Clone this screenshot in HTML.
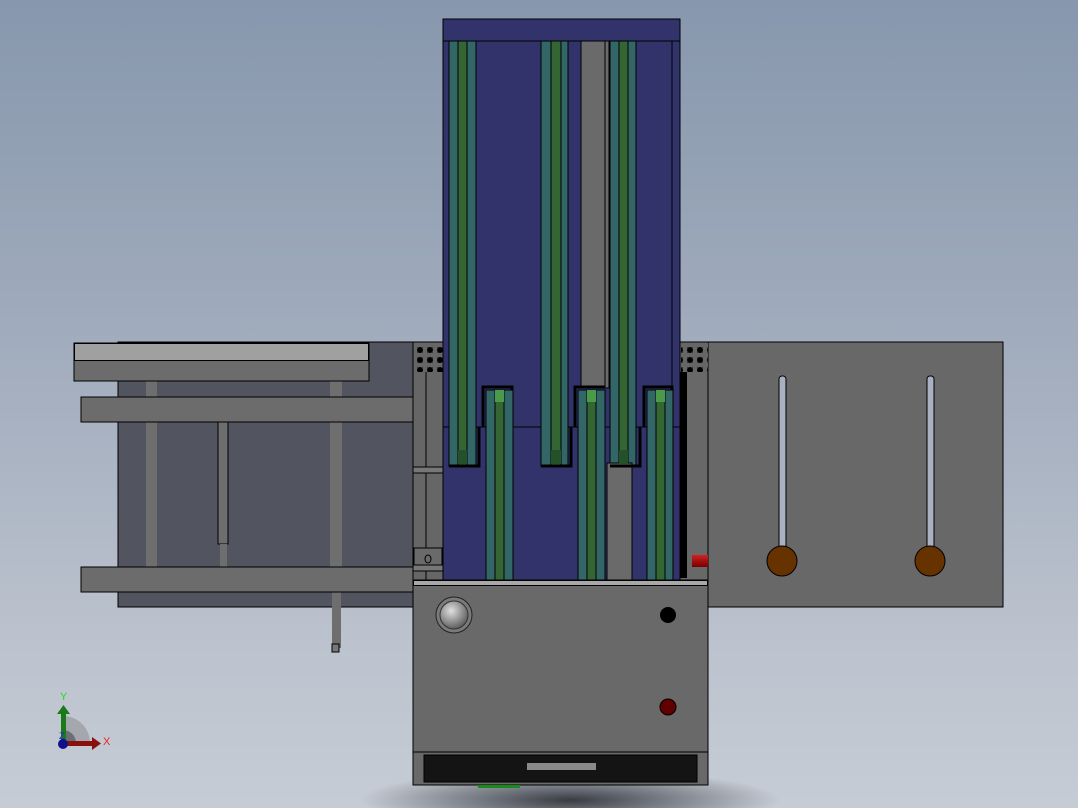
<!DOCTYPE html>
<html><head><meta charset="utf-8"><style>
html,body{margin:0;padding:0;width:1078px;height:808px;overflow:hidden}
body{background:linear-gradient(#8797ad 0%,#a6b0c0 50%,#bcc3ce 80%,#c6ccd5 100%);font-family:"Liberation Sans",sans-serif}
svg{position:absolute;left:0;top:0;overflow:hidden;display:block}
</style></head><body>
<svg width="1078" height="808" viewBox="0 0 1078 808">
<defs>
<radialGradient id="sh" cx="0.5" cy="0.5" r="0.5"><stop offset="0" stop-color="#2a2c33" stop-opacity="0.9"/><stop offset="1" stop-color="#2a2c33" stop-opacity="0"/></radialGradient>
<radialGradient id="kn" cx="0.4" cy="0.35" r="0.7"><stop offset="0" stop-color="#e0e0e0"/><stop offset="1" stop-color="#555"/></radialGradient>
<linearGradient id="rd" x1="0" y1="0" x2="0" y2="1"><stop offset="0" stop-color="#d02020"/><stop offset="1" stop-color="#700"/></linearGradient>
<pattern id="dots" width="10" height="10" patternUnits="userSpaceOnUse"><rect width="10" height="10" fill="#666"/><circle cx="5" cy="5" r="3.5" fill="#000"/><rect x="3" y="0" width="4" height="10" fill="#666"/><rect x="0" y="3" width="10" height="4" fill="#666"/><circle cx="0" cy="0" r="3" fill="#000"/><circle cx="10" cy="0" r="3" fill="#000"/><circle cx="0" cy="10" r="3" fill="#000"/><circle cx="10" cy="10" r="3" fill="#000"/></pattern>
</defs>
<ellipse cx="570" cy="800" rx="210" ry="30" fill="url(#sh)"/>
<rect x="118" y="342" width="295" height="265" fill="#52545f" stroke="#000"/>
<rect x="146" y="381" width="11" height="186" fill="#6e6e6e"/>
<rect x="330" y="381" width="12" height="186" fill="#6e6e6e"/>
<rect x="332" y="592" width="9" height="56" fill="#6e6e6e"/>
<rect x="332" y="644" width="7" height="8" fill="#777" stroke="#000"/>
<rect x="218" y="422" width="10" height="122" fill="#6e6e6e" stroke="#000"/>
<rect x="220" y="544" width="7" height="23" fill="#6e6e6e"/>
<rect x="74" y="343" width="295" height="38" fill="#6c6c6c" stroke="#000"/>
<rect x="74.5" y="343.5" width="294" height="17" fill="#a0a0a0" stroke="#000"/>
<rect x="81" y="397" width="332" height="25" fill="#6c6c6c" stroke="#000"/>
<rect x="81" y="567" width="332" height="25" fill="#6c6c6c" stroke="#000"/>
<rect x="413" y="342" width="30" height="238" fill="#666" stroke="#000"/>
<rect x="414" y="343" width="29" height="29" fill="url(#dots)"/>
<line x1="426" y1="372" x2="426" y2="580" stroke="#000"/>
<rect x="413" y="467" width="37" height="6" fill="#777" stroke="#000"/>
<rect x="413" y="565" width="37" height="6" fill="#777" stroke="#000"/>
<rect x="414" y="548" width="28" height="17" fill="#6a6a6a" stroke="#000"/>
<ellipse cx="428" cy="559" rx="3" ry="4" fill="none" stroke="#000"/>
<rect x="708" y="342" width="295" height="265" fill="#686868" stroke="#000"/>
<rect x="680" y="342" width="28" height="238" fill="#686868" stroke="#000"/>
<rect x="681" y="343" width="27" height="29" fill="url(#dots)"/>
<rect x="680" y="372" width="7" height="206" fill="#000"/>
<rect x="692" y="555" width="16" height="12" fill="url(#rd)"/>
<rect x="779" y="376" width="7" height="173" rx="3" fill="#a9b1c1" stroke="#000"/>
<rect x="927" y="376" width="7" height="173" rx="3" fill="#a9b1c1" stroke="#000"/>
<circle cx="782" cy="561" r="15" fill="#663300" stroke="#000"/>
<circle cx="930" cy="561" r="15" fill="#663300" stroke="#000"/>
<rect x="443" y="19" width="237" height="561" fill="#32336a" stroke="#000"/>
<rect x="443" y="19" width="237" height="22" fill="#32336a" stroke="#000"/>
<line x1="443" y1="427" x2="680" y2="427" stroke="#000"/>
<line x1="672" y1="41" x2="672" y2="580" stroke="#000"/>
<g stroke="#000">
<rect x="449" y="41" width="27" height="425" fill="#336666"/>
<rect x="458" y="41" width="9" height="425" fill="#336633"/>
<rect x="541" y="41" width="27" height="425" fill="#336666"/>
<rect x="551" y="41" width="10" height="425" fill="#336633"/>
<rect x="610" y="41" width="26" height="425" fill="#336666"/>
<rect x="619" y="41" width="9" height="425" fill="#336633"/>
<rect x="581" y="41" width="24" height="347" fill="#6a6a6a"/>
<rect x="605" y="41" width="4" height="347" fill="#6a6a6a"/>
<rect x="607" y="463" width="25" height="117" fill="#6a6a6a"/>
</g>
<g fill="none" stroke="#000" stroke-width="3">
<path d="M449 466H479V427M541 466H571V427M610 466H640V427"/>
<path d="M483 427V387H512V580M575 427V387H605M644 427V387H672V580"/>
</g>
<g stroke="#000">
<rect x="486" y="390" width="27" height="190" fill="#336666"/>
<rect x="495" y="390" width="9" height="190" fill="#336633"/>
<rect x="578" y="390" width="27" height="190" fill="#336666"/>
<rect x="587" y="390" width="9" height="190" fill="#336633"/>
<rect x="647" y="390" width="26" height="190" fill="#336666"/>
<rect x="656" y="390" width="9" height="190" fill="#336633"/>
</g>
<g fill="#4a9a4a"><rect x="495" y="390" width="9" height="12"/><rect x="587" y="390" width="9" height="12"/><rect x="656" y="390" width="9" height="12"/></g>
<g fill="#24502a"><rect x="458" y="450" width="9" height="14"/><rect x="551" y="450" width="10" height="14"/><rect x="619" y="450" width="9" height="14"/></g>
<rect x="413" y="580" width="295" height="205" fill="#696969" stroke="#000"/>
<rect x="413.5" y="580.5" width="294" height="5" fill="#a8a8a8" stroke="#000"/>
<line x1="413" y1="752" x2="708" y2="752" stroke="#000"/>
<rect x="424" y="755" width="273" height="27" fill="#141414" stroke="#000"/>
<rect x="527" y="763" width="69" height="7" fill="#8a8a8a"/>
<rect x="478" y="785" width="42" height="3" fill="#1a8a1a"/>
<circle cx="454" cy="615" r="18" fill="#7a7a7a" stroke="#222"/>
<circle cx="454" cy="615" r="14" fill="url(#kn)" stroke="#333"/>
<circle cx="668" cy="615" r="8" fill="#000"/>
<circle cx="668" cy="707" r="8" fill="#600000" stroke="#000"/>
<path d="M63 743V716A27 27 0 0 1 90 743Z" fill="#a4a8ae"/>
<path d="M63 743V730A13 13 0 0 1 76 743Z" fill="#6b6f75"/>
<rect x="61" y="712" width="5" height="31" fill="#1a7a1a"/>
<path d="M57 714L63.5 705L70 714Z" fill="#1a7a1a"/>
<rect x="63" y="741" width="30" height="5" fill="#8a1010"/>
<path d="M92 737L101 743.5L92 750Z" fill="#8a1010"/>
<circle cx="63" cy="744" r="5" fill="#10108a"/>
<text x="60" y="700" font-size="11" fill="#22dd22">Y</text>
<text x="103" y="745" font-size="11" fill="#ee2222">X</text>
<text x="59" y="739" font-size="9" fill="#2222dd">Z</text>
</svg>
</body></html>
